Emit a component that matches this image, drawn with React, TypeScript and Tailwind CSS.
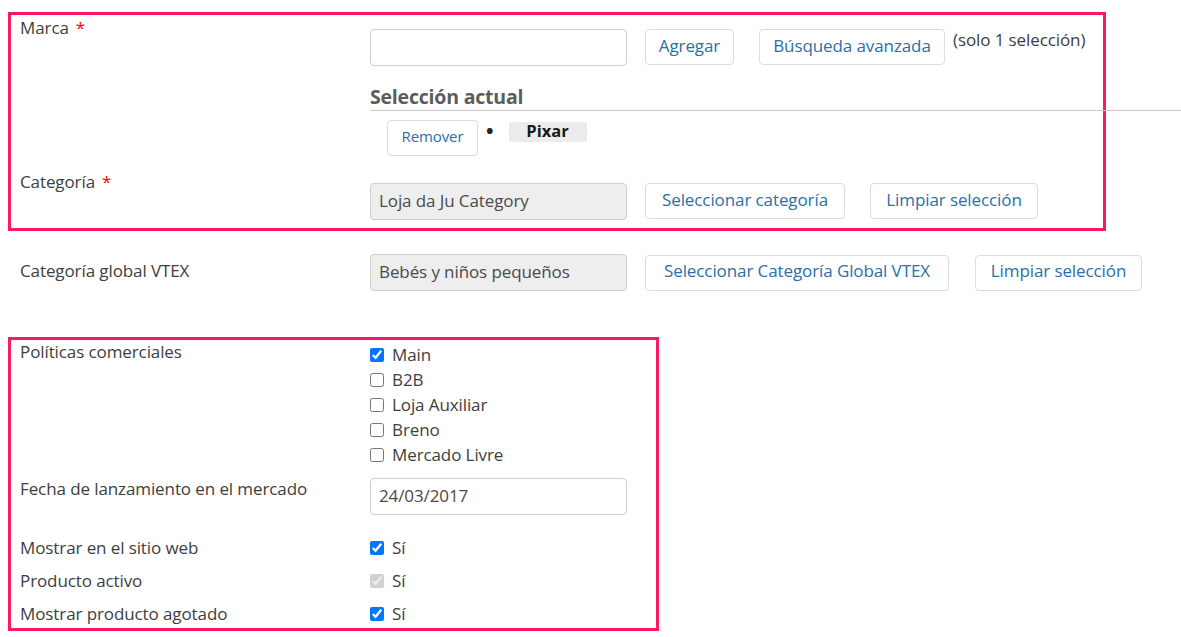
import { ReactNode } from "react";

const font = { fontFamily: '"Open Sans", "Liberation Sans", sans-serif' };

function Label({ children, required, className = "" }: { children: ReactNode; required?: boolean; className?: string }) {
  return (
    <div className={"w-[359px] shrink-0 pl-[9px] text-[17px] leading-6 tracking-[-0.1px] text-[#3d3e40] " + className}>
      {children}
      {required && <span className="ml-[7px] text-[#f00]">*</span>}
    </div>
  );
}

function Btn({ children, className = "" }: { children: ReactNode; className?: string }) {
  return (
    <button
      className={
        "h-[36px] shrink-0 rounded-[4px] border border-[#dcdcdc] bg-white pb-[3px] text-[17px] tracking-[-0.1px] text-[#2b6fa6] " +
        className
      }
    >
      {children}
    </button>
  );
}

function TextBox({ value = "", disabled }: { value?: string; disabled?: boolean }) {
  return (
    <div
      className={
        "flex h-[37px] w-[257px] shrink-0 items-center rounded-[4px] border border-[#cfcfcf] px-[8px] pb-[2px] text-[17px] tracking-[-0.1px] text-[#4a4a4a] " +
        (disabled ? "bg-[#eeeeee]" : "bg-white")
      }
    >
      {value}
    </div>
  );
}

function Check({ checked, disabled, label }: { checked?: boolean; disabled?: boolean; label: string }) {
  return (
    <label className="flex h-[25px] items-center gap-[8px] text-[17px] tracking-[-0.1px] text-[#3d3e40]">
      <input type="checkbox" defaultChecked={checked} disabled={disabled} className="m-0 h-[14px] w-[14px]" />
      {label}
    </label>
  );
}

export default function App() {
  return (
    <div className="min-h-[637px] w-[1181px] overflow-hidden bg-white pt-[12px]" style={font}>
      {/* Marca / Categoría */}
      <div className="ml-[8px] h-[219px] w-[1098px] border-[3px] border-[#f71963]">
        <div className="flex pt-[1px]">
          <Label required>Marca</Label>
          <div className="pt-[13px]">
            <div className="flex items-start">
              <TextBox />
              <Btn className="ml-[18px] w-[89px]">Agregar</Btn>
              <Btn className="ml-[25px] w-[186px]">Búsqueda avanzada</Btn>
              <span className="ml-[8px] mt-[-2px] text-[17px] tracking-[-0.1px] text-[#3d3e40]">(solo 1 selección)</span>
            </div>
            <div className="mt-[19px] w-[811px] border-b border-[#cccccc] pb-[1px] text-[19.5px] font-bold leading-6 tracking-[-0.2px] text-[#5c5c5c]">
              Selección actual
            </div>
            <div className="mt-[9px] flex items-start">
              <Btn className="ml-[17px] w-[91px] !text-[15px]">Remover</Btn>
              <span className="ml-[8px] mt-[1px] text-[20px] font-bold leading-[20px] text-[#222]">•</span>
              <span className="ml-[15px] mt-[2px] flex h-[20px] w-[78px] items-center justify-center bg-[#ececec] pb-[1px] text-[16.5px] font-bold text-[#1a1a1a]">
                Pixar
              </span>
            </div>
          </div>
        </div>
        <div className="mt-[15px] flex">
          <Label required className="mt-[-1px]">Categoría</Label>
          <div className="flex items-start pt-[12px]">
            <TextBox value="Loja da Ju Category" disabled />
            <Btn className="ml-[18px] w-[200px]">Seleccionar categoría</Btn>
            <Btn className="ml-[25px] w-[168px]">Limpiar selección</Btn>
          </div>
        </div>
      </div>

      {/* Categoría global */}
      <div className="ml-[11px] mt-[23px] flex items-center">
        <Label className="mt-[-3px]">Categoría global VTEX</Label>
        <TextBox value="Bebés y niños pequeños" disabled />
        <Btn className="ml-[18px] w-[304px]">Seleccionar Categoría Global VTEX</Btn>
        <Btn className="ml-[26px] w-[167px]">Limpiar selección</Btn>
      </div>

      {/* Políticas etc */}
      <div className="ml-[8px] mt-[46px] h-[294px] w-[651px] border-[3px] border-[#f71963]">
        <div className="flex">
          <Label>Políticas comerciales</Label>
          <div className="pt-[2px]">
            <Check checked label="Main" />
            <Check label="B2B" />
            <Check label="Loja Auxiliar" />
            <Check label="Breno" />
            <Check label="Mercado Livre" />
          </div>
        </div>
        <div className="mt-[10px] flex items-start">
          <Label>Fecha de lanzamiento en el mercado</Label>
          <div className="pt-[1px]">
            <TextBox value="24/03/2017" />
          </div>
        </div>
        <div className="mt-[16px] flex h-[33px] items-center">
          <Label>Mostrar en el sitio web</Label>
          <Check checked label="Sí" />
        </div>
        <div className="flex h-[33px] items-center">
          <Label>Producto activo</Label>
          <Check checked disabled label="Sí" />
        </div>
        <div className="flex h-[33px] items-center">
          <Label>Mostrar producto agotado</Label>
          <Check checked label="Sí" />
        </div>
      </div>
    </div>
  );
}
